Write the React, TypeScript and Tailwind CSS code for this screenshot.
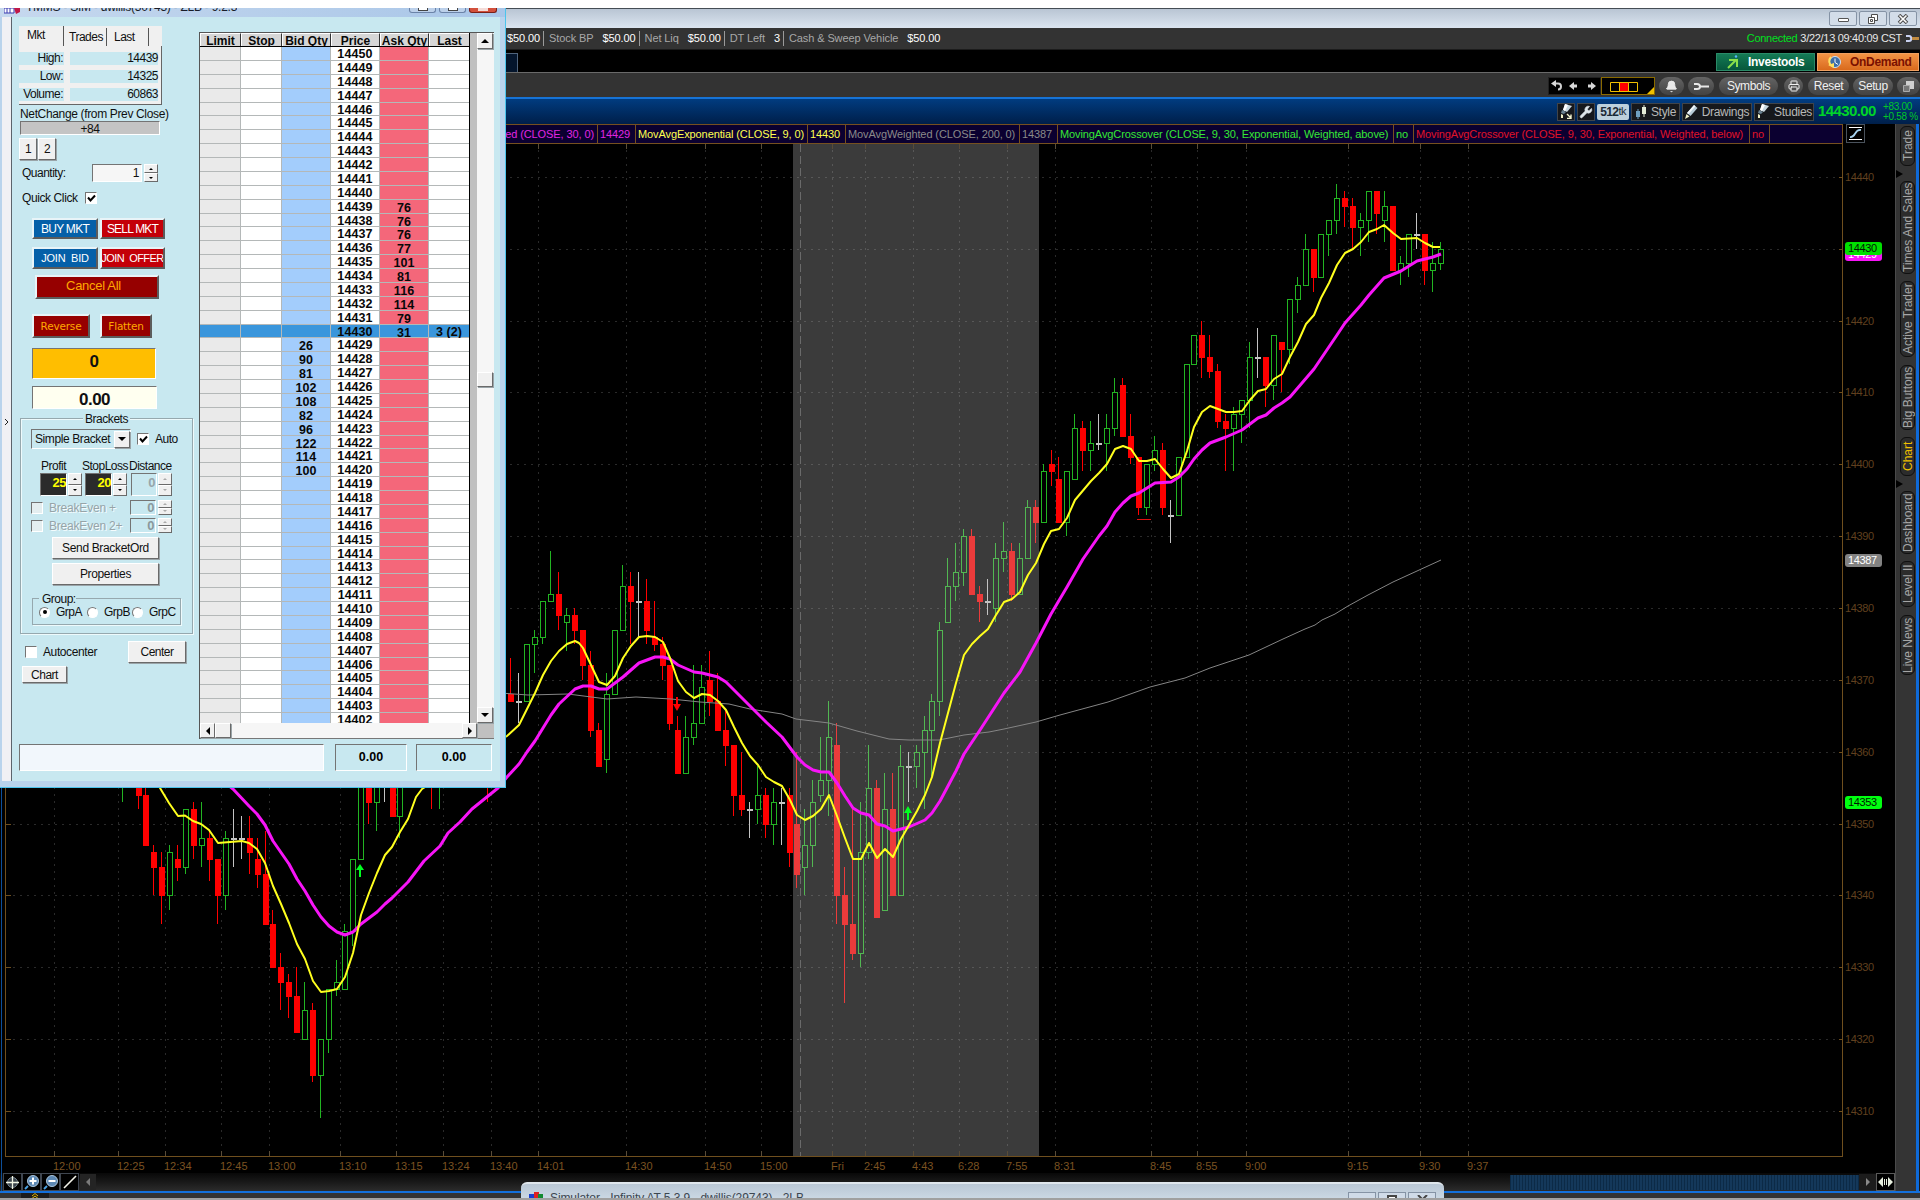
import type { ReactNode } from "react";
import clsx from "clsx";
import { Bell, Printer, Wrench } from "lucide-react";

/* ---------- chart data ---------- */

type Kind = "u" | "d" | "n";

// x, kind, high, body top, body bottom, low (prices are offsets from 14000)
const candles: [number, Kind, number, number, number, number][] = [
  [123, "u", 362, 361, 356, 353],
  [139, "d", 361, 360, 354, 352],
  [146, "d", 355, 354, 347, 347],
  [154, "d", 347, 346, 344, 340],
  [162, "d", 346, 344, 340, 336],
  [170, "u", 347, 346, 340, 338],
  [178, "d", 347, 345, 344, 342],
  [186, "u", 352, 352, 344, 343],
  [194, "d", 353, 352, 347, 345],
  [202, "u", 353, 348, 347, 344],
  [210, "d", 349, 348, 345, 342],
  [218, "d", 345, 345, 340, 336],
  [226, "u", 349, 348, 340, 338],
  [234, "n", 352, 348, 348, 344],
  [242, "n", 351, 348, 348, 345],
  [250, "d", 351, 348, 346, 343],
  [258, "d", 348, 345, 343, 341],
  [266, "d", 349, 343, 336, 336],
  [273, "d", 338, 336, 330, 330],
  [281, "d", 332, 330, 328, 324],
  [289, "d", 329, 328, 326, 323],
  [297, "d", 330, 326, 321, 321],
  [305, "u", 328, 324, 320, 320],
  [313, "d", 325, 324, 315, 314],
  [321, "u", 320, 320, 315, 309],
  [329, "u", 327, 327, 320, 318],
  [337, "u", 331, 328, 327, 326],
  [345, "u", 336, 335, 327, 327],
  [353, "u", 345, 345, 335, 333],
  [361, "u", 360, 360, 345, 345],
  [369, "d", 360, 358, 353, 350],
  [377, "u", 360, 358, 353, 349],
  [385, "n", 360, 357, 357, 353],
  [393, "d", 362, 358, 351, 351],
  [400, "u", 362, 359, 351, 348],
  [432, "d", 362, 360, 357, 352],
  [440, "u", 363, 361, 358, 352],
  [488, "d", 365, 363, 359, 353],
  [511, "d", 373, 368, 367, 367],
  [519, "n", 371, 367, 367, 364],
  [527, "u", 375, 375, 367, 367],
  [535, "u", 377, 376, 375, 371],
  [543, "u", 381, 381, 376, 375],
  [551, "u", 388, 382, 381, 381],
  [559, "d", 385, 382, 379, 377],
  [567, "u", 380, 379, 378, 374],
  [575, "d", 380, 379, 377, 375],
  [583, "d", 377, 377, 372, 370],
  [591, "d", 374, 372, 363, 362],
  [599, "d", 364, 363, 358, 358],
  [607, "u", 371, 368, 359, 357],
  [615, "u", 377, 377, 368, 368],
  [623, "u", 386, 383, 377, 377],
  [631, "d", 385, 383, 381, 375],
  [639, "n", 385, 381, 381, 376],
  [647, "d", 384, 381, 377, 375],
  [655, "d", 381, 376, 375, 374],
  [663, "d", 376, 375, 372, 370],
  [670, "d", 372, 372, 364, 363],
  [678, "d", 365, 363, 357, 357],
  [686, "u", 365, 362, 357, 357],
  [694, "u", 372, 364, 362, 361],
  [702, "u", 372, 369, 364, 364],
  [710, "d", 374, 370, 367, 365],
  [718, "d", 371, 367, 363, 363],
  [726, "d", 366, 363, 361, 358],
  [734, "d", 361, 361, 354, 351],
  [742, "d", 360, 354, 352, 351],
  [750, "n", 353, 352, 352, 348],
  [758, "u", 358, 354, 352, 350],
  [766, "d", 355, 354, 350, 348],
  [774, "u", 355, 353, 350, 347],
  [782, "n", 355, 353, 353, 347],
  [790, "d", 355, 354, 346, 344],
  [797, "d", 360, 350, 343, 341],
  [805, "u", 352, 347, 344, 340],
  [813, "u", 356, 353, 347, 344],
  [821, "u", 362, 356, 354, 353],
  [829, "u", 367, 362, 356, 351],
  [837, "d", 364, 361, 340, 336],
  [845, "d", 344, 340, 336, 325],
  [853, "d", 352, 336, 332, 331],
  [861, "u", 353, 346, 332, 330],
  [869, "u", 361, 355, 346, 345],
  [877, "d", 356, 355, 337, 337],
  [885, "u", 357, 352, 338, 338],
  [893, "d", 357, 352, 340, 340],
  [901, "u", 361, 358, 340, 340],
  [909, "n", 360, 358, 358, 353],
  [917, "u", 361, 360, 358, 355],
  [925, "u", 365, 363, 360, 352],
  [932, "u", 368, 367, 363, 356],
  [940, "u", 378, 377, 367, 365],
  [948, "u", 387, 383, 378, 378],
  [956, "u", 389, 385, 383, 381],
  [964, "u", 391, 390, 385, 383],
  [972, "d", 391, 390, 382, 382],
  [980, "d", 383, 382, 381, 378],
  [988, "n", 384, 381, 381, 379],
  [996, "u", 389, 387, 380, 378],
  [1004, "u", 392, 388, 387, 385],
  [1012, "d", 389, 388, 382, 381],
  [1020, "u", 389, 387, 382, 382],
  [1028, "u", 395, 394, 387, 387],
  [1036, "d", 395, 394, 392, 389],
  [1044, "u", 400, 399, 392, 392],
  [1052, "d", 402, 400, 399, 397],
  [1059, "d", 401, 398, 392, 392],
  [1067, "u", 399, 399, 392, 390],
  [1075, "u", 407, 405, 398, 398],
  [1083, "d", 406, 405, 402, 399],
  [1091, "u", 406, 403, 402, 399],
  [1099, "n", 407, 403, 403, 402],
  [1107, "u", 407, 405, 403, 399],
  [1115, "u", 412, 410, 405, 404],
  [1123, "d", 412, 411, 404, 404],
  [1131, "d", 407, 404, 401, 400],
  [1139, "d", 401, 401, 394, 393],
  [1147, "u", 400, 400, 394, 393],
  [1155, "u", 404, 402, 400, 399],
  [1163, "d", 403, 402, 394, 393],
  [1171, "n", 395, 393, 393, 389],
  [1179, "u", 401, 401, 393, 393],
  [1187, "u", 414, 414, 401, 401],
  [1194, "u", 418, 418, 414, 414],
  [1202, "d", 420, 418, 415, 412],
  [1210, "d", 418, 415, 413, 412],
  [1218, "d", 414, 413, 406, 405],
  [1226, "d", 407, 406, 405, 399],
  [1234, "u", 408, 407, 405, 399],
  [1242, "u", 409, 409, 407, 403],
  [1250, "u", 417, 415, 409, 405],
  [1258, "n", 419, 415, 415, 412],
  [1266, "d", 415, 415, 411, 408],
  [1274, "u", 418, 418, 411, 409],
  [1282, "d", 417, 417, 416, 410],
  [1290, "u", 423, 423, 416, 414],
  [1298, "u", 426, 425, 423, 421],
  [1306, "u", 432, 430, 425, 425],
  [1314, "d", 430, 430, 426, 424],
  [1321, "u", 432, 432, 426, 426],
  [1329, "u", 434, 434, 432, 429],
  [1337, "u", 439, 437, 434, 432],
  [1345, "d", 438, 437, 436, 433],
  [1353, "d", 437, 436, 433, 430],
  [1361, "u", 435, 434, 433, 429],
  [1369, "u", 438, 438, 434, 431],
  [1377, "d", 438, 438, 435, 432],
  [1385, "u", 438, 436, 434, 431],
  [1393, "d", 436, 436, 427, 427],
  [1401, "u", 429, 428, 427, 425],
  [1409, "u", 432, 432, 428, 426],
  [1417, "n", 435, 432, 432, 430],
  [1425, "d", 432, 432, 427, 425],
  [1433, "u", 431, 428, 427, 424],
  [1441, "u", 431, 430, 428, 427],
];

const ema9 =
  "150,775 160,788 169,803 178,816 185,815.5 193,821 201,824 209,830 218,843 242,841 249,843 257,849 265,863 273,886 281,904 289,923 297,944 305,959 313,981 321,992 329,991 337,989 345,977 353,953 361,915 369,893 377,873 385,855 392,847 400,832 408,819 416,797 422,789 507,736 519,725 527,709 535,693 543,675 551,661 559,651 567,644 575,641 579,643 583,648 591,665 599,682 607,685 615,676 623,658 631,646 639,637 647,636 655,637 663,642 670,658 678,681 686,692 694,698 702,694 710,695 718,701 726,710 734,727 742,743 750,756 758,765 766,777 774,782 782,786 790,800 797,815 805,820 813,816 821,809 829,795 837,816 845,838 853,859 861,859 869,843 877,858 885,849 893,857 901,839 909,825 917,811 925,795 932,777 940,743 948,713 956,683 964,655 972,644 980,636 988,629 996,615 1004,602 1012,599 1020,592 1028,575 1036,563 1044,544 1051,531 1059,529 1067,518 1075,500 1091,481 1099,473 1107,464 1115,449 1123,446 1131,449 1139,461 1147,461 1155,459 1163,469 1171,478 1179,474 1187,451 1194,427 1202,412 1210,406 1226,412 1234,412 1242,411 1250,400 1258,391 1266,389 1274,379 1282,374 1290,357 1298,342 1306,324 1314,315 1321,298 1329,283 1337,265 1345,253 1353,249 1361,242 1369,232 1377,229 1384,225 1393,233 1401,239 1417,238 1425,243 1433,247 1440,247";

const wma30 =
  "220,778 233,789 249,806 257,814 265,825 273,841 289,864 297,879 305,891 313,905 321,917 329,926 337,932 345,935 353,932 361,924 377,912 385,904 392,898 408,882 424,861 440,846 448,833 460,822 472,809 498,788 507,777 519,764 527,752 535,741 551,715 559,704 575,689 583,686 591,686 599,689 607,689 623,677 639,663 655,657 663,657 670,659 678,665 694,672 702,673 718,677 726,682 734,690 750,706 766,722 782,737 797,757 805,765 813,770 821,772 829,772 837,783 845,796 853,808 861,813 869,815 877,824 885,826 893,831 909,827 925,820 932,813 940,801 956,771 964,754 980,730 1004,693 1020,672 1036,643 1051,614 1067,587 1083,559 1099,536 1107,526 1115,512 1123,503 1131,496 1139,493 1155,483 1171,482 1179,477 1187,469 1194,459 1202,450 1210,443 1226,437 1242,430 1258,418 1266,415 1274,408 1282,403 1290,397 1314,369 1337,335 1345,323 1361,305 1369,295 1384,278 1401,271 1417,261 1433,257 1441,254";

const wma200 =
  "500,693 528,695 568,694 607,699 636,697 671,699 700,702 729,704 750,709 782,714 796,719 829,723 857,731 889,739 909,740 939,740 964,735 989,732 1004,729 1036,722 1060,715 1108,702 1150,687 1185,678 1210,668 1249,655 1283,639 1305,629 1315,625 1322,620 1335,614 1348,606 1368,595 1393,582 1417,571 1441,560";

const times: [number, string][] = [
  [54, "12:00"], [118, "12:25"], [165, "12:34"], [221, "12:45"], [269, "13:00"],
  [340, "13:10"], [396, "13:15"], [443, "13:24"], [491, "13:40"], [538, "14:01"],
  [626, "14:30"], [705, "14:50"], [761, "15:00"], [832, "Fri"], [865, "2:45"],
  [913, "4:43"], [959, "6:28"], [1007, "7:55"], [1055, "8:31"], [1151, "8:45"],
  [1197, "8:55"], [1246, "9:00"], [1348, "9:15"], [1420, "9:30"], [1468, "9:37"],
];

const prices = [440, 430, 420, 410, 400, 390, 380, 370, 360, 350, 340, 330, 320, 310];

const toY = (p: number) => Math.floor(177.4 + (440 - p) * 7.185);

function Candle({ c }: { c: [number, Kind, number, number, number, number] }) {
  const [x, kind, high, top, bottom, low] = c;
  const yHigh = toY(high);
  const yTop = toY(top);
  const yBottom = toY(bottom);
  const yLow = toY(low);

  if (kind === "n") {
    return (
      <g fill="#c4c4c4">
        <rect x={x - 1} y={yHigh} width={1} height={yLow - yHigh} />
        <rect x={x - 3} y={yTop} width={6} height={2} />
      </g>
    );
  }
  const color = kind === "u" ? "#22b422" : "#ff0000";
  return (
    <g fill={color}>
      <rect x={x - 1} y={yHigh} width={1} height={yLow - yHigh} />
      <rect x={x - 3} y={yTop} width={6} height={yBottom - yTop + 1} />
      {kind === "u" && (
        <rect x={x - 2} y={yTop + 1} width={4} height={Math.max(yBottom - yTop - 1, 1)} fill="#000" />
      )}
    </g>
  );
}

function PriceTag({ y, label, fill, color }: { y: number; label: string; fill: string; color: string }) {
  return (
    <g>
      <rect x={1845} y={y - 6} width={37} height={13} rx={3} fill={fill} />
      <text x={1848} y={y + 4} fontSize={11} fill={color} textLength={29}>
        {label}
      </text>
    </g>
  );
}

function Chart() {
  return (
    <svg
      className="block shrink-0 bg-black font-['Liberation_Sans',Arial,sans-serif]"
      width={1895}
      height={1029}
      viewBox="0 144 1895 1029"
    >
      {/* Grid */}
      <g stroke="#2a2a2a" strokeWidth={1} shapeRendering="crispEdges">
        {prices.map((p) => (
          <line key={p} x1={6} x2={1842} y1={toY(p) + 0.5} y2={toY(p) + 0.5} strokeDasharray="2 5" />
        ))}
        {times.map(([x]) => (
          <line key={x} x1={x + 0.5} x2={x + 0.5} y1={150} y2={1156} strokeDasharray="2 5" />
        ))}
      </g>

      {/* Candles */}
      <g shapeRendering="crispEdges">
        {candles.map((c) => (
          <Candle key={c[0]} c={c} />
        ))}
      </g>

      {/* After hours session */}
      <rect x={793} y={144} width={246} height={1012} fill="#bfbfbf" fillOpacity={0.31} />
      <line x1={800.5} x2={800.5} y1={144} y2={1156} stroke="#6a6a6a" strokeDasharray="8 4" />

      {/* Studies */}
      <g fill="none" strokeLinejoin="round">
        <polyline points={wma200} stroke="#858585" strokeWidth={1} />
        <polyline points={wma30} stroke="#f714f7" strokeWidth={3} />
        <polyline points={ema9} stroke="#ffff1e" strokeWidth={2} />
      </g>

      {/* Crossover arrows */}
      <g fill="#00ff20">
        <path d="M360 864l4 6h-3v7h-2v-7h-3z" />
        <path d="M908 806l4 7h-3v7h-2v-7h-3z" />
      </g>
      <path d="M677 711l-4-7h3v-7h2v7h3z" fill="#ff0000" />
      <rect x={1137} y={519} width={14} height={1} fill="#e01010" />

      {/* Axes */}
      <g stroke="#6f4f1e" strokeWidth={1} shapeRendering="crispEdges">
        <path d="M5.5 144V1156.500H1842.500V144" fill="none" />
        {times.map(([x]) => (
          <path key={x} d={`M${x + 0.5} 1151V1156M${x + 0.5} 144V149`} stroke="#594c38" />
        ))}
        {prices.map((p) => (
          <path key={p} d={`M1839 ${toY(p) + 0.5}H1843M5 ${toY(p) + 0.5}H11`} />
        ))}
      </g>
      <g fill="#7b5221" fontSize={11}>
        {times.map(([x, label]) => (
          <text key={x} x={x - 1} y={1170}>
            {label}
          </text>
        ))}
        {prices
          .filter((p) => p !== 430)
          .map((p) => (
            <text key={p} x={1845} y={toY(p) + 4} fill="#60401f" textLength={29}>
              {14000 + p}
            </text>
          ))}
      </g>
      <PriceTag y={254} label="14429" fill="#f714f7" color="#fff" />
      <PriceTag y={248} label="14430" fill="#00e000" color="#001800" />
      <PriceTag y={560} label="14387" fill="#828282" color="#fff" />
      <PriceTag y={802} label="14353" fill="#00ff10" color="#001800" />
    </svg>
  );
}

/* ---------- platform chrome ---------- */

function Balance({ label, value, last }: { label?: string; value: string; last?: boolean }) {
  return (
    <div className={clsx("flex items-center gap-[9px] pr-[3px] mr-[5px]", !last && "border-r border-[#9a9a9a]")}>
      {label && <span className="text-[#a8a8a8]">{label}</span>}
      <span className="text-white">{value}</span>
    </div>
  );
}

function CaptionButton({ children }: { children: ReactNode }) {
  return (
    <div className="flex h-[15px] w-[28px] items-center justify-center rounded-[2px] border border-[#8593a5] bg-[#d3dde9]">
      {children}
    </div>
  );
}

function Pill({ className, children }: { className: string; children: ReactNode }) {
  return (
    <div
      className={clsx(
        "flex h-[18px] shrink-0 items-center justify-center rounded-full bg-gradient-to-b from-[#646464] to-[#434343] text-[#f0f0f0]",
        className
      )}
    >
      {children}
    </div>
  );
}

function ChartTool({ className, children }: { className: string; children: ReactNode }) {
  return (
    <div
      className={clsx(
        "flex h-[18px] shrink-0 items-center justify-center gap-[4px] border border-[#40444a] bg-[#16181c] text-[#b8b8b8]",
        className
      )}
    >
      {children}
    </div>
  );
}

// Flat paint brush: wide head at the top right, short tip at the bottom left
function PaintIcon({ menu }: { menu?: boolean }) {
  return (
    <svg width="14" height="15" viewBox="0 0 14 15">
      <path d="M6 0l7 2-5 6-4-2z" fill="#c8d8e0" />
      <path d="M6 0l3 1-3 6-2-1z" fill="#fff" />
      <path d="M3 6l4 2-2 2-3-1z" fill="#6c8494" />
      <path d="M2 10l2 1v3H2z" fill="#f0f0c8" />
      {menu && <path d="M8 10l4 4M12 10.500v4H8" stroke="#f4f4d0" fill="none" strokeWidth="1.400" />}
    </svg>
  );
}

function TopBars() {
  return (
    <>
      <div className="flex h-[20px] items-center justify-end gap-[2px] border-t border-[#454d55] bg-gradient-to-b from-[#b9c5d3] to-[#dbe5f0] pr-[3px]">
        <CaptionButton>
          <div className="mt-[3px] h-[4px] w-[11px] rounded-[1px] border border-[#555] bg-white" />
        </CaptionButton>
        <CaptionButton>
          <svg width="12" height="12" viewBox="0 0 12 12" fill="#fff" stroke="#4d4d4d">
            <path d="M4.500 1.500h6v6h-6z" />
            <path d="M1.500 4.500h6v6h-6zM3.500 6.500h2v2h-2z" />
          </svg>
        </CaptionButton>
        <CaptionButton>
          <svg width="12" height="10" viewBox="0 0 12 10">
            <path d="M2 1l8 8M10 1l-8 8" stroke="#4d4d4d" strokeWidth="3.600" />
            <path d="M2.500 1.500l7 7M9.500 1.500l-7 7" stroke="#fff" strokeWidth="1.600" />
          </svg>
        </CaptionButton>
      </div>

      <div className="flex h-[22px] items-center justify-between border-b border-[#1c1c1c] bg-[#333333] pl-[507px] text-[11px] tracking-[-0.1px]">
        <div className="flex h-[15px]">
          <Balance value="$50.00" />
          <Balance label="Stock BP" value="$50.00" />
          <Balance label="Net Liq" value="$50.00" />
          <Balance label="DT Left" value="3" />
          <Balance label="Cash & Sweep Vehicle" value="$50.00" last />
        </div>
        <div className="flex items-center gap-[3px] pr-[1px] tracking-[-0.3px]">
          <span className="text-[#00e020]">Connected</span>
          <span className="text-[#e8e8e8]">3/22/13 09:40:09 CST</span>
          <svg width="14" height="9" viewBox="0 0 14 9">
            <path d="M1 2h3c3 0 3 5 0 5H1" fill="none" stroke="#c8d0f0" strokeWidth="2" />
            <path d="M7 4.500h7" stroke="#c08a40" strokeWidth="3" />
          </svg>
        </div>
      </div>

      <div className="flex h-[23px] justify-between border-b border-[#6a6a6a] bg-black">
        <div className="mt-[3px] w-[518px] border-r border-t border-[#50647c] bg-[#04152c]" />
        <div className="mt-[3px] flex h-[18px] gap-[2px] pr-[1px] text-[12px] font-bold tracking-[-0.3px]">
          <div className="flex w-[99px] items-center gap-[9px] border border-[#2b8a68] bg-gradient-to-b from-[#147a55] to-[#07583c] pl-[10px] text-white">
            <svg width="12" height="14" viewBox="0 0 12 14" fill="none" stroke="#8be04a" strokeWidth="2">
              <path d="M1 13l8-8M2 5h8v7" />
              <circle cx="9" cy="1.500" r="1.200" fill="#5ab4ff" stroke="none" />
            </svg>
            Investools
          </div>
          <div className="flex w-[102px] items-center gap-[8px] border border-[#f0a060] bg-gradient-to-b from-[#f39444] to-[#d96a1c] pl-[8px] text-[#7a1000]">
            <svg width="16" height="14" viewBox="0 0 16 14">
              <circle cx="9" cy="7" r="5.500" fill="#3c6ea8" stroke="#cfe2f5" />
              <path d="M9 3.500v4l3 2" stroke="#fff" fill="none" />
              <path d="M5 2c-3 3-2 7 1 9" stroke="#ffe060" strokeWidth="2" fill="none" />
              <path d="M2 10l6 3V8z" fill="#ffe060" />
            </svg>
            OnDemand
          </div>
        </div>
      </div>

      <div className="flex h-[24px] items-center justify-end bg-[#333333] pt-[2px] text-[12px] tracking-[-0.4px]">
        <div className="flex h-[18px] w-[53px] items-center justify-around border border-[#222] bg-black">
          <svg width="48" height="12" viewBox="0 0 48 12">
            <path d="M3 3.500h4c4 0 4 6 0 6" fill="none" stroke="#d0d0d0" strokeWidth="2" />
            <path d="M5 0v7L0 3.500zM23 2v8l-5-4zM40 2v8l5-4z" fill="#d8d8d8" />
            <path d="M22 4.500h4v3h-4zM37 4.500h4v3h-4z" fill="#d8d8d8" />
          </svg>
        </div>
        <div className="flex h-[18px] w-[54px] items-center justify-center border border-[#8a6a00] bg-black">
          <svg width="52" height="16" viewBox="0 0 52 16">
            <path d="M8.500 4.500h27v9h-27z" fill="#000" stroke="#f0c000" />
            <path d="M17.500 4.500h9v9h-9z" fill="#ff0000" stroke="#f0c000" />
            <path d="M52 9v7h-7z" fill="#f0c000" />
          </svg>
        </div>
        <Pill className="ml-[4px] w-[25px]">
          <Bell size={13} fill="#e8e8e8" strokeWidth={1.5} />
        </Pill>
        <Pill className="ml-[4px] w-[26px]">
          <svg width="15" height="9" viewBox="0 0 15 9" fill="none" stroke="#e8e8e8" strokeWidth="2">
            <path d="M0 2h3c4 0 4 5 0 5H0M6 4.500h9" />
          </svg>
        </Pill>
        <Pill className="ml-[5px] w-[59px]">Symbols</Pill>
        <Pill className="ml-[6px] w-[19px]">
          <Printer size={12} />
        </Pill>
        <Pill className="ml-[5px] w-[41px]">Reset</Pill>
        <Pill className="ml-[4px] w-[40px]">Setup</Pill>
        <Pill className="ml-[4px] w-[23px]">
          <svg width="11" height="11" viewBox="0 0 11 11">
            <path d="M3 0h8v8H3z" fill="#d0d0d0" />
            <path d="M.5 4.500h6v6h-6z" fill="#777" stroke="#aaa" />
          </svg>
        </Pill>
      </div>

      <div className="flex h-[27px] items-center justify-end gap-[2px] border-t-2 border-[#1673d6] bg-gradient-to-b from-[#013c80] to-[#001f4a] pr-[5px] text-[12px] tracking-[-0.3px]">
        <ChartTool className="w-[18px]">
          <PaintIcon menu />
        </ChartTool>
        <ChartTool className="w-[18px]">
          <Wrench size={14} color="#dfe6ea" fill="#dfe6ea" strokeWidth={1} />
        </ChartTool>
        <div className="flex h-[16px] w-[32px] items-center justify-center rounded-[2px] bg-[#bcd0dc] text-[12px] font-bold tracking-[-0.6px] text-[#1b2a36]">
          512<span className="text-[11px] font-normal">tk</span>
        </div>
        <ChartTool className="w-[49px]">
          <svg width="12" height="14" viewBox="0 0 12 14">
            <path d="M3 4v10" stroke="#6fa0c0" />
            <path d="M1 6h4v6H1z" fill="#6fa0c0" />
            <path d="M9 0v12" stroke="#e4ecd8" />
            <path d="M7 2h4v7H7z" fill="#e4ecd8" />
          </svg>
          Style
        </ChartTool>
        <ChartTool className="w-[70px]">
          <svg width="13" height="14" viewBox="0 0 13 14">
            <path d="M9 0l3.500 3-7 8L2 8z" fill="#b8ccd8" />
            <path d="M9 0l1.500 1.200-7 8L2 8z" fill="#f0f6fa" />
            <path d="M1.500 9l3 2.500L0 14z" fill="#f0f0c8" />
          </svg>
          Drawings
        </ChartTool>
        <ChartTool className="w-[60px]">
          <PaintIcon />
          Studies
        </ChartTool>
        <div className="w-[65px] pl-[2px] text-[15px] font-bold tracking-[-0.6px] text-[#00d428]">14430.00</div>
        <div className="w-[32px] text-[10px] leading-[10px] tracking-[-0.3px] whitespace-nowrap text-[#00c82a]">
          <p>+83.00</p>
          <p>+0.58 %</p>
        </div>
      </div>
    </>
  );
}

function StudyLabels() {
  const cell = "flex h-full shrink-0 items-center border-r border-[#76501f] pl-[2px] whitespace-nowrap overflow-hidden";
  return (
    <div className="flex h-[20px] w-[1843px] border border-l-0 border-[#76501f] bg-[#0b0030] text-[11px] tracking-[-0.1px]">
      <div className={clsx(cell, "w-[598px] justify-end pr-[3px] text-[#e226e2]")}>MovAvgWeighted (CLOSE, 30, 0)</div>
      <div className={clsx(cell, "w-[38px] text-[#e226e2]")}>14429</div>
      <div className={clsx(cell, "w-[172px] text-[#ffff50]")}>MovAvgExponential (CLOSE, 9, 0)</div>
      <div className={clsx(cell, "w-[38px] text-[#ffff50]")}>14430</div>
      <div className={clsx(cell, "w-[174px] text-[#8a8a8a]")}>MovAvgWeighted (CLOSE, 200, 0)</div>
      <div className={clsx(cell, "w-[38px] text-[#8a8a8a]")}>14387</div>
      <div className={clsx(cell, "w-[336px] text-[#35e835]")}>
        MovingAvgCrossover (CLOSE, 9, 30, Exponential, Weighted, above)
      </div>
      <div className={clsx(cell, "w-[20px] text-[#35e835]")}>no</div>
      <div className={clsx(cell, "w-[336px] text-[#e01228]")}>
        MovingAvgCrossover (CLOSE, 9, 30, Exponential, Weighted, below)
      </div>
      <div className={clsx(cell, "w-[20px] text-[#e01228]")}>no</div>
    </div>
  );
}

const gadgets = [
  { label: "Trade", box: "mt-[2px] h-[40px]", notch: true },
  { label: "Times And Sales", box: "h-[93px]" },
  { label: "Active Trader", box: "mt-[7px] h-[76px]" },
  { label: "Big Buttons", box: "mt-[8px] h-[65px]" },
  { label: "Chart", box: "mt-[7px] h-[39px]", notch: true },
  { label: "Dashboard", box: "h-[63px]" },
  { label: "Level II", box: "mt-[7px] h-[46px]" },
  { label: "Live News", box: "mt-[8px] h-[60px]" },
];

function Sidebar() {
  return (
    <div className="flex w-[21px] shrink-0 flex-col border-l border-[#4a4a4a] bg-[#343434]">
      {gadgets.map((g) => (
        <div key={g.label} className="flex shrink-0 flex-col">
          <div
            className={clsx(
              "ml-[4px] flex w-[15px] shrink-0 rotate-180 items-center justify-center rounded-[6px] border border-[#101010] bg-[#2c2c2c] text-[12px] leading-none whitespace-nowrap [writing-mode:vertical-rl]",
              g.box,
              g.label === "Chart" ? "text-[#f0c000]" : "text-[#a6a6a6]"
            )}
          >
            {g.label}
          </div>
          {g.notch && (
            <div className="flex h-[15px] items-center">
              <div className="h-0 w-0 border-y-[4px] border-l-[7px] border-y-transparent border-l-black" />
            </div>
          )}
        </div>
      ))}
    </div>
  );
}

function BottomBar() {
  const tool = "flex h-[18px] w-[19px] shrink-0 items-center justify-center border border-[#3f4650] bg-black";
  return (
    <div className="flex h-[18px] w-[1895px] items-center bg-gradient-to-b from-[#080808] to-[#2c2c2c] pl-[3px]">
      <div className={tool}>
        <svg width="15" height="15" viewBox="0 0 15 15">
          <circle cx="7.500" cy="7.500" r="5" fill="#39424a" stroke="#7c8a94" />
          <path d="M7.500 1v13M1 7.500h13" stroke="#f0f4e4" strokeWidth="1.300" />
        </svg>
      </div>
      <div className={tool}>
        <svg width="16" height="16" viewBox="0 0 16 16">
          <path d="M1 15l3-3" stroke="#4aa0e0" strokeWidth="2" />
          <circle cx="9" cy="7" r="5.500" fill="#5c88b4" stroke="#a8c4dc" />
          <path d="M9 3.500v7M5.500 7h7" stroke="#fff" strokeWidth="2" />
        </svg>
      </div>
      <div className={tool}>
        <svg width="16" height="16" viewBox="0 0 16 16">
          <path d="M1 15l3-3" stroke="#4aa0e0" strokeWidth="2" />
          <circle cx="9" cy="7" r="5.500" fill="#5c88b4" stroke="#a8c4dc" />
          <path d="M5.500 7h7" stroke="#fff" strokeWidth="2" />
        </svg>
      </div>
      <div className={tool}>
        <svg width="16" height="16" viewBox="0 0 16 16">
          <path d="M2 14L14 2" stroke="#f4f4ea" strokeWidth="1.600" />
        </svg>
      </div>
      <div className="ml-px flex h-[16px] w-[16px] items-center justify-center bg-[#242424]">
        <div className="h-0 w-0 border-y-4 border-r-4 border-y-transparent border-r-[#7a7a7a]" />
      </div>
      <div className="flex-1" />
      <div className="h-[15px] w-[349px] bg-[repeating-linear-gradient(90deg,#0c2a46_0_1px,#14385a_1px_3px)]" />
      <div className="flex h-[16px] w-[17px] items-center justify-center bg-[#1c1c1c]">
        <div className="h-0 w-0 border-y-4 border-l-4 border-y-transparent border-l-[#8a8a8a]" />
      </div>
      <div className="flex h-[18px] w-[19px] items-center justify-center border border-[#5a5a5a] bg-black">
        <svg width="15" height="12" viewBox="0 0 15 12" fill="#e8f0e0">
          <path d="M0 6l5-5v10zM15 6l-5-5v10zM6 3h1v6H6zM8 3h1v6H8z" />
        </svg>
      </div>
    </div>
  );
}

function Platform() {
  return (
    <div className="flex h-[1200px] w-[1920px] flex-col bg-black">
      <div className="h-[8px] shrink-0 bg-white" />
      <TopBars />
      <div className="flex h-[1067px] shrink-0">
        <div className="relative flex w-[1895px] flex-col">
          <div className="flex h-[20px] shrink-0">
            <StudyLabels />
            <div className="ml-[3px] flex h-[19px] w-[19px] items-center justify-center border border-[#4a525c] bg-black">
              <svg width="15" height="15" viewBox="0 0 15 15" fill="none" stroke="#fff">
                <path d="M1 1.500h13M1 13.500h13" />
                <path d="M2 11c6 1 4-8 11-7" stroke="#a8d4f0" strokeWidth="1.800" />
              </svg>
            </div>
          </div>
          <Chart />
          <BottomBar />
          <div className="absolute left-[1px] top-0 h-full w-px bg-[#0d4f9a]" />
        </div>
        <Sidebar />
        <div className="w-[3px] bg-[#0f6ad8]" />
        <div className="w-px bg-[#1a1a1a]" />
      </div>
      <div className="h-[2px] shrink-0 bg-[#1370dc]" />
      <div className="flex h-[5px] shrink-0 bg-[#333] pl-[21px]">
        <div className="flex w-[28px] justify-center bg-[#1c1c1c]">
          <svg width="8" height="5" viewBox="0 0 8 5" fill="none" stroke="#e0b400">
            <path d="M1 3l3-2.500L7 3M1 5.500L4 3l3 2.500" />
          </svg>
        </div>
      </div>
      <div className="h-[2px] shrink-0 bg-[#a0a0a0]" />
    </div>
  );
}

/* ---------- order window ---------- */

const raised = "border border-t-white border-l-white border-r-[#6a6a6a] border-b-[#6a6a6a] bg-[#f0f0f0] shadow-[1px_1px_0_#9aa4a8]";
const sunken = "border border-t-[#747474] border-l-[#747474] border-r-white border-b-white";

function Spinner({ height, dim }: { height: string; dim?: boolean }) {
  const half = "flex flex-1 items-center justify-center border border-t-white border-l-white border-r-[#6a6a6a] border-b-[#6a6a6a] bg-[#f0f0f0]";
  return (
    <div className={clsx("flex w-[14px] shrink-0 flex-col", height)}>
      <div className={half}>
        <div className={clsx("h-0 w-0 border-x-2 border-b-2 border-x-transparent", dim ? "border-b-[#aaa]" : "border-b-black")} />
      </div>
      <div className={half}>
        <div className={clsx("h-0 w-0 border-x-2 border-t-2 border-x-transparent", dim ? "border-t-[#aaa]" : "border-t-black")} />
      </div>
    </div>
  );
}

function Check({ on, dim }: { on?: boolean; dim?: boolean }) {
  return (
    <div className={clsx("flex h-[12px] w-[12px] shrink-0 items-center justify-center", sunken, dim ? "bg-[#e4eef0]" : "bg-white")}>
      {on && (
        <svg width="9" height="9" viewBox="0 0 9 9">
          <path d="M1 3.500l2.500 3L8 1.500" fill="none" stroke="#000" strokeWidth="2" />
        </svg>
      )}
    </div>
  );
}

function Radio({ on }: { on?: boolean }) {
  return (
    <div className="flex h-[11px] w-[11px] shrink-0 items-center justify-center rounded-full border border-b-white border-l-[#777] border-r-white border-t-[#777] bg-white">
      {on && <div className="h-[4px] w-[4px] rounded-full bg-black" />}
    </div>
  );
}

function Stat({ label, value }: { label: string; value: string }) {
  return (
    <div className="flex h-[13px] gap-[6px] leading-[13px]">
      <div className="w-[45px] bg-[#c8e8f0] pr-px text-right">{label}</div>
      <div className="w-[88px] bg-[#c8e8f0] text-right">{value}</div>
    </div>
  );
}

function ActionButton({ className, children }: { className: string; children: ReactNode }) {
  return (
    <div
      className={clsx(
        "flex shrink-0 items-center justify-center overflow-hidden border-2 border-b-[#5c5c5c] border-l-[#e8f4f8] border-r-[#5c5c5c] border-t-[#e8f4f8] whitespace-nowrap",
        className
      )}
    >
      {children}
    </div>
  );
}

function OrderControls() {
  return (
    <div className="flex w-[187px] shrink-0 flex-col pl-[7px] text-[12px] leading-[12px] tracking-[-0.5px] text-[#101010]">
      {/* Market stats tabs */}
      <div className="flex h-[20px] w-[143px] items-end bg-[#f0f0f0]">
        <div className="h-[20px] w-[45px] border-r border-[#555] pl-[8px] pt-[3px]">Mkt</div>
        <div className="h-[18px] w-[43px] border-r border-[#555] pl-[5px] pt-[3px]">Trades</div>
        <div className="h-[18px] w-[42px] border-r border-[#555] pl-[7px] pt-[3px]">Last</div>
      </div>
      <div className="flex h-[59px] w-[143px] flex-col gap-[5px] border-b border-r border-[#666] bg-[#f0f0f0] pt-[6px]">
        <Stat label="High:" value="14439" />
        <Stat label="Low:" value="14325" />
        <Stat label="Volume:" value="60863" />
      </div>

      <div className="mt-[3px] pl-[1px] tracking-[-0.35px] whitespace-nowrap">NetChange (from Prev Close)</div>
      <div className={clsx("ml-[1px] mt-[1px] flex h-[14px] w-[140px] items-center justify-center bg-[#c4c4c4] pt-px", sunken)}>+84</div>

      <div className="mt-[3px] flex gap-[1px]">
        <div className={clsx("flex h-[22px] w-[18px] items-center justify-center", raised)}>1</div>
        <div className={clsx("flex h-[22px] w-[18px] items-center justify-center", raised)}>2</div>
      </div>

      <div className="mt-[4px] flex h-[18px] items-center pl-[3px]">
        <span className="w-[70px]">Quantity:</span>
        <div className={clsx("flex h-[18px] w-[50px] items-center justify-end bg-[#f6f6f6] pr-[2px]", sunken)}>1</div>
        <div className="w-[2px]" />
        <Spinner height="h-[18px]" />
      </div>

      <div className="mt-[10px] flex h-[12px] items-center pl-[3px]">
        <span className="w-[63px] tracking-[-0.4px]">Quick Click</span>
        <Check on />
      </div>

      {/* Order buttons */}
      <div className="mt-[14px] flex gap-[2px] pl-[13px] text-[12px] text-white">
        <ActionButton className="h-[21px] w-[66px] bg-[#0560a8] tracking-[-0.7px]">BUY MKT</ActionButton>
        <ActionButton className="h-[21px] w-[65px] bg-[#c40008] tracking-[-0.8px]">SELL MKT</ActionButton>
      </div>
      <div className="mt-[8px] flex gap-[2px] pl-[13px] text-[11px] tracking-[-0.2px] text-white">
        <ActionButton className="h-[22px] w-[66px] bg-[#0560a8]">JOIN&nbsp; BID</ActionButton>
        <ActionButton className="h-[22px] w-[65px] bg-[#c40008] tracking-[-0.55px]">JOIN&nbsp; OFFER</ActionButton>
      </div>
      <ActionButton className="ml-[16px] mt-[6px] h-[24px] w-[124px] bg-[#960000] pr-[7px] pb-[3px] text-[13px] tracking-[-0.3px] text-[#ffa800]">
        Cancel All
      </ActionButton>
      <div className="mt-[15px] flex gap-[10px] pl-[13px] font-['DejaVu_Sans',sans-serif] text-[10.5px] tracking-[-0.2px] text-[#ffa800]">
        <ActionButton className="h-[24px] w-[58px] bg-[#960000]">Reverse</ActionButton>
        <ActionButton className="h-[24px] w-[52px] bg-[#960000]">Flatten</ActionButton>
      </div>

      <div className={clsx("ml-[13px] mt-[10px] flex h-[31px] w-[124px] shrink-0 items-center justify-center bg-[#ffbe00] pb-[3px] text-[17px] font-bold", sunken)}>
        0
      </div>
      <div className={clsx("ml-[13px] mt-[7px] flex h-[23px] w-[125px] shrink-0 items-center justify-center bg-[#fffff0] pt-[4px] text-[17px] font-bold", sunken)}>
        0.00
      </div>

      {/* Brackets group */}
      <div className="ml-[1px] mt-[9px] h-[216px] w-[173px] shrink-0 border border-[#96a8ae] shadow-[1px_1px_0_#eefafc,inset_1px_1px_0_#eefafc]">
        <div className="mx-auto -mt-[6px] w-[47px] bg-[#c8e8f0] text-center tracking-[-0.45px]">Brackets</div>
        <div className="mt-[4px] flex items-center pl-[10px]">
          <div className={clsx("flex h-[20px] w-[100px] items-center justify-between pl-[3px] tracking-[-0.4px]", sunken)}>
            Simple Bracket
            <div className={clsx("flex h-[17px] w-[16px] items-center justify-center", raised)}>
              <div className="h-0 w-0 border-x-[4px] border-t-[4px] border-x-transparent border-t-black" />
            </div>
          </div>
          <div className="w-[6px]" />
          <Check on />
          <span className="pl-[6px]">Auto</span>
        </div>
        <div className="mt-[11px] flex whitespace-nowrap pl-[20px] tracking-[-0.5px]">
          <span className="w-[41px]">Profit</span>
          <span className="w-[47px]">StopLoss</span>
          <span>Distance</span>
        </div>
        <div className="mt-[1px] flex pl-[19px] text-[13px] font-bold">
          <div className={clsx("flex h-[23px] w-[27px] justify-end bg-[#2b2b2b] pt-[3px] text-[#ffff00]", sunken)}>25</div>
          <div className="w-px" />
          <Spinner height="h-[23px]" />
          <div className="w-[3px]" />
          <div className={clsx("flex h-[23px] w-[27px] justify-end bg-[#2b2b2b] pt-[3px] text-[#ffff00]", sunken)}>20</div>
          <div className="w-px" />
          <Spinner height="h-[23px]" />
          <div className="w-[4px]" />
          <div className={clsx("flex h-[23px] w-[26px] justify-end pt-[3px] pr-px text-[#97a5a9]", sunken)}>0</div>
          <div className="w-px" />
          <Spinner height="h-[23px]" dim />
        </div>
        <div className="flex flex-col gap-[3px] pt-[4px]">
          {["BreakEven +", "BreakEven 2+"].map((label) => (
            <div key={label} className="flex h-[15px] items-center overflow-hidden pl-[10px]">
              <Check dim />
              <span className="w-[87px] pl-[6px] tracking-[-0.2px] text-[#96a4a8] [text-shadow:1px_1px_0_#f4fcfe]">{label}</span>
              <div className={clsx("flex h-[15px] w-[26px] items-center justify-end pr-px text-[13px] font-bold text-[#8a989c]", sunken)}>0</div>
              <div className="w-[2px]" />
              <Spinner height="h-[15px]" dim />
            </div>
          ))}
        </div>
        <div className={clsx("ml-[31px] mt-[4px] flex h-[22px] w-[107px] items-center justify-center tracking-[-0.35px]", raised)}>
          Send BracketOrd
        </div>
        <div className={clsx("ml-[31px] mt-[4px] flex h-[22px] w-[107px] items-center justify-center tracking-[-0.35px]", raised)}>
          Properties
        </div>
        <div className="ml-[11px] mt-[13px] h-[27px] w-[149px] border border-[#96a8ae] shadow-[1px_1px_0_#eefafc]">
          <div className="-mt-[6px] ml-[6px] w-[37px] bg-[#c8e8f0] pl-[3px]">Group:</div>
          <div className="mt-[1px] flex items-center pl-[6px]">
            <Radio on />
            <span className="w-[37px] pl-[6px]">GrpA</span>
            <Radio />
            <span className="w-[34px] pl-[6px]">GrpB</span>
            <Radio />
            <span className="pl-[6px]">GrpC</span>
          </div>
        </div>
      </div>

      <div className="mt-[7px] flex items-center pl-[6px]">
        <Check />
        <span className="w-[91px] pl-[6px] tracking-[-0.4px]">Autocenter</span>
        <div className={clsx("flex h-[22px] w-[58px] items-center justify-center", raised)}>Center</div>
      </div>
      <div className={clsx("ml-[3px] mt-[3px] flex h-[17px] w-[45px] items-center justify-center", raised)}>Chart</div>
    </div>
  );
}

const askQty: Record<number, string> = {
  14439: "76", 14438: "76", 14437: "76", 14436: "77", 14435: "101",
  14434: "81", 14433: "116", 14432: "114", 14431: "79", 14430: "31",
};

const bidQty: Record<number, string> = {
  14429: "26", 14428: "90", 14427: "81", 14426: "102", 14425: "108",
  14424: "82", 14423: "96", 14422: "122", 14421: "114", 14420: "100",
};

const ladder = Array.from({ length: 49 }, (_, i) => 14450 - i);
const columns = "grid grid-cols-[41px_41px_49px_49px_49px_41px]";

function PriceLadder() {
  return (
    <div className="flex h-[707px] w-[295px] shrink-0 flex-col border-l border-t border-[#555] bg-[#c0c0c0] text-[12.5px] font-bold text-[#080808]">
      <div className="flex h-[690px]">
        <div className="flex h-[690px] w-[270px] flex-col overflow-hidden border-r border-black">
          <div className={clsx(columns, "h-[14px] shrink-0 overflow-hidden border-b border-black bg-[#d6d6d6] text-[12px] leading-[15px]")}>
            {["Limit", "Stop", "Bid Qty", "Price", "Ask Qty", "Last"].map((name) => (
              <div key={name} className="h-[13px] overflow-hidden border-l border-t border-l-white border-t-white border-r border-r-[#333] text-center whitespace-nowrap">
                {name}
              </div>
            ))}
          </div>
          {ladder.map((price) => {
            const active = price === 14430;
            const cell = "border-b border-r border-[#b4b8b8] text-center";
            return (
              <div key={price} className={clsx(columns, "h-[13.89px] shrink-0 grid-rows-[100%] leading-[14px] tracking-[0.1px]")}>
                <div className={clsx(cell, active ? "bg-[#3a96dc]" : "bg-[#eaeaea]")} />
                <div className={clsx(cell, active ? "bg-[#3a96dc]" : "bg-white")} />
                <div className={clsx(cell, active ? "bg-[#3a96dc]" : "bg-[#a3cdfc]")}>
                  <span className="relative top-[1px]">{bidQty[price]}</span>
                </div>
                <div className={clsx(cell, active ? "bg-[#3a96dc]" : "bg-white")}>{price}</div>
                <div className={clsx(cell, active ? "bg-[#3a96dc]" : "bg-[#f4677a]")}>
                  <span className="relative top-[1px]">{askQty[price]}</span>
                </div>
                <div className={clsx(cell, active ? "bg-[#3a96dc]" : "bg-white")}>{active && "3 (2)"}</div>
              </div>
            );
          })}
        </div>
        <div className="w-[7px] bg-[#c0c0c0]" />
        <div className="flex h-full w-[17px] flex-col bg-[#f6f6f6]">
          <div className={clsx("flex h-[16px] w-[16px] items-center justify-center", raised)}>
            <div className="h-0 w-0 border-x-[4px] border-b-[4px] border-x-transparent border-b-black" />
          </div>
          <div className={clsx("mt-[323px] h-[15px] w-[16px]", raised)} />
          <div className={clsx("mt-auto flex h-[16px] w-[16px] items-center justify-center", raised)}>
            <div className="h-0 w-0 border-x-[4px] border-t-[4px] border-x-transparent border-t-black" />
          </div>
        </div>
      </div>
      <div className="flex h-[16px] border-b border-[#777]">
        <div className="flex w-[277px] bg-[#f6f6f6]">
          <div className={clsx("flex h-[15px] w-[15px] items-center justify-center", raised)}>
            <div className="h-0 w-0 border-y-[4px] border-r-[4px] border-y-transparent border-r-black" />
          </div>
          <div className={clsx("h-[15px] w-[16px]", raised)} />
          <div className={clsx("ml-auto flex h-[15px] w-[15px] items-center justify-center", raised)}>
            <div className="h-0 w-0 border-y-[4px] border-l-[4px] border-y-transparent border-l-black" />
          </div>
        </div>
      </div>
    </div>
  );
}

function OrderWindow() {
  return (
    <div className="absolute left-0 top-[8px] flex h-[780px] w-[506px] flex-col overflow-hidden border-b border-r border-[#4cc4ec] bg-[#b9d3ec]">
      <div className="flex h-[9px] shrink-0 items-end justify-between bg-gradient-to-r from-[#c6d8ee] to-[#a9c6e8] pl-[4px] pr-[8px]">
        <div className="flex h-[9px] items-start gap-[6px] overflow-hidden">
          <svg width="16" height="6" viewBox="0 0 16 6">
            <path d="M0 0h10v5H0z" fill="#fff" stroke="#3a3ab0" />
            <path d="M3 0v5M6 0v5" stroke="#3a3ab0" />
            <path d="M10 0h6v4l-4 2z" fill="#c01848" />
          </svg>
          <div className="-mt-[8px] text-[12px] leading-[15px] tracking-[-0.25px] whitespace-pre text-[#181c28]">
            TMMS - SIM - dwillis(30743) - ZLB - 9.2.3
          </div>
        </div>
        <div className="flex h-full items-start gap-[3px]">
          <div className="flex h-[5px] w-[27px] justify-center rounded-b-[3px] border border-t-0 border-[#6b83a8] bg-[#bcd0ea]">
            <div className="h-[3px] w-[10px] border border-t-0 border-[#444] bg-white" />
          </div>
          <div className="flex h-[5px] w-[27px] justify-center rounded-b-[3px] border border-t-0 border-[#6b83a8] bg-[#bcd0ea]">
            <div className="h-[3px] w-[10px] border border-t-0 border-[#444] bg-white" />
          </div>
          <div className="flex h-[5px] w-[28px] justify-center rounded-b-[3px] border border-t-0 border-[#7a2018] bg-[#d2503c]">
            <div className="h-[3px] w-[10px] bg-[#f4dcd8]" />
          </div>
        </div>
      </div>
      <div className="flex flex-1 pb-[6px] pl-[2px] pr-[5px]">
        <div className="flex w-[10px] shrink-0 items-center justify-center border-r border-[#5c646c] bg-[#f0f0f4]">
          <svg width="5" height="8" viewBox="0 0 5 8" className="mt-[45px]">
            <path d="M1 1l3 3-3 3" fill="none" stroke="#222" />
          </svg>
        </div>
        <div className="flex flex-1 flex-col bg-[#c8e8f0] pt-[9px]">
          <div className="flex h-[717px]">
            <OrderControls />
            <div className="pt-[6px]">
              <PriceLadder />
            </div>
          </div>
          <div className="mt-[1px] flex pl-[7px] text-[12.5px] font-bold">
            <div className={clsx("h-[27px] w-[305px] bg-[#f2f7fc]", sunken)} />
            <div className={clsx("ml-[11px] flex h-[27px] w-[72px] items-center justify-center", sunken)}>0.00</div>
            <div className={clsx("ml-[9px] flex h-[27px] w-[76px] items-center justify-center", sunken)}>0.00</div>
          </div>
        </div>
      </div>
    </div>
  );
}

function MinimizedWindow() {
  const button = "flex h-[6px] w-[28px] justify-center border border-b-0 border-[#8593a5] bg-[#d0dbe8] pt-[2px]";
  return (
    <div className="absolute left-[521px] top-[1182px] flex h-[16px] w-[923px] items-end justify-between overflow-hidden rounded-t-[6px] border-t-2 border-[#dfe6ec] bg-gradient-to-b from-[#b9c7d5] to-[#cad7e3] pl-[8px] pr-[8px]">
      <div className="flex h-[6px] items-start gap-[6px] overflow-hidden">
        <svg width="15" height="7" viewBox="0 0 15 7">
          <path d="M0 2h6v5H0z" fill="#1a3fd0" />
          <path d="M5 0h5v7H5z" fill="#e02020" />
          <path d="M9 2h5v5H9z" fill="#128a30" />
        </svg>
        <div className="-mt-[1px] text-[12px] leading-[14px] tracking-[-0.1px] whitespace-nowrap text-[#3c4650]">
          Simulator - Infinity AT 5.3.9 - dwillis(29743) - 2LB
        </div>
      </div>
      <div className="flex gap-[2px]">
        <div className={button} />
        <div className={button}>
          <div className="h-[4px] w-[10px] border-2 border-b-0 border-[#444] bg-white" />
        </div>
        <div className={button}>
          <svg width="11" height="4" viewBox="0 0 11 4">
            <path d="M1 0l4 4M10 0L6 4" stroke="#444" strokeWidth="2" />
          </svg>
        </div>
      </div>
    </div>
  );
}

export default function App() {
  return (
    <div className="relative h-[1200px] w-[1920px] overflow-hidden bg-black font-['Liberation_Sans',Arial,sans-serif]">
      <Platform />
      <OrderWindow />
      <MinimizedWindow />
    </div>
  );
}
